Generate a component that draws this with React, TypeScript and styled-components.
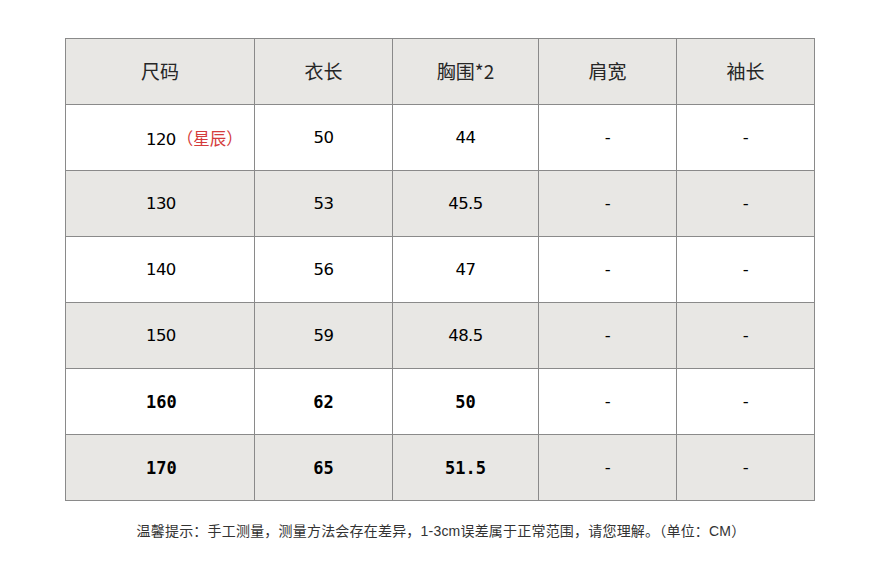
import React from "react";
import styled, { createGlobalStyle } from "styled-components";

const Global = createGlobalStyle`
  html, body { margin: 0; padding: 0; background: #ffffff; }
  body { font-family: "Liberation Sans", "Noto Sans CJK SC", sans-serif; }
`;

const Page = styled.div`
  width: 880px;
  height: 570px;
  padding: 38px 0 0 65px;
  box-sizing: border-box;
  background: #ffffff;
`;

const Table = styled.table`
  border-collapse: collapse;
  table-layout: fixed;
  width: 750px;
`;

const Row = styled.tr<{ $shade: boolean }>`
  height: 66px;
  background: ${(p) => (p.$shade ? "#e8e7e4" : "#ffffff")};
`;

const HeadCell = styled.th`
  border: 1px solid #8a8a8a;
  padding: 0 0 2px 0;
  font-family: "Noto Sans CJK SC", sans-serif;
  font-weight: 400;
  font-size: 19px;
  color: #262626;
  text-align: center;
  vertical-align: middle;
`;

const Cell = styled.td<{ $bold: boolean; $first?: boolean }>`
  border: 1px solid #8a8a8a;
  padding: 0 0 0 ${(p) => (p.$first ? "80px" : "0")};
  text-align: ${(p) => (p.$first ? "left" : "center")};
  vertical-align: middle;
  color: #000;
  font-family: ${(p) =>
    p.$bold
      ? '"DejaVu Sans Mono", "Liberation Mono", monospace'
      : '"DejaVu Sans", "Noto Sans CJK SC", sans-serif'};
  font-weight: ${(p) => (p.$bold ? 700 : 400)};
  font-size: ${(p) => (p.$bold ? "17px" : "16.5px")};
  letter-spacing: ${(p) => (p.$bold ? "0" : "-0.6px")};
  white-space: nowrap;
`;

const Note = styled.span`
  font-family: "Noto Sans CJK SC", sans-serif;
  font-size: 16.5px;
  letter-spacing: 0;
  color: #d43c3c;
  margin-left: 1px;
`;

const Footer = styled.p`
  margin: 19px 0 0 -65px;
  width: 880px;
  text-align: center;
  font-family: "Noto Sans CJK SC", sans-serif;
  font-size: 14px;
  letter-spacing: 0.2px;
  color: #333;
  padding-left: 2px;
  box-sizing: border-box;
`;

const Num = styled.span`
  font-family: "Liberation Sans", sans-serif;
`;

const headers = ["尺码", "衣长", "胸围*2", "肩宽", "袖长"];
const widths = [189, 138, 146, 138, 138];

type RowData = { size: string; note?: string; cols: string[]; bold?: boolean };
const rows: RowData[] = [
  { size: "120", note: "（星辰）", cols: ["50", "44", "-", "-"] },
  { size: "130", cols: ["53", "45.5", "-", "-"] },
  { size: "140", cols: ["56", "47", "-", "-"] },
  { size: "150", cols: ["59", "48.5", "-", "-"] },
  { size: "160", cols: ["62", "50", "-", "-"], bold: true },
  { size: "170", cols: ["65", "51.5", "-", "-"], bold: true },
];

export default function App() {
  return (
    <Page>
      <Global />
      <Table>
        <colgroup>
          {widths.map((w, i) => (
            <col key={i} style={{ width: w }} />
          ))}
        </colgroup>
        <thead>
          <Row $shade>
            {headers.map((h) => (
              <HeadCell key={h}>{h}</HeadCell>
            ))}
          </Row>
        </thead>
        <tbody>
          {rows.map((r, i) => (
            <Row key={r.size} $shade={i % 2 === 1}>
              <Cell $bold={!!r.bold} $first>
                {r.size}
                {r.note && <Note>{r.note}</Note>}
              </Cell>
              {r.cols.map((c, j) => (
                <Cell key={j} $bold={!!r.bold && c !== "-"}>
                  {c}
                </Cell>
              ))}
            </Row>
          ))}
        </tbody>
      </Table>
      <Footer>
        温馨提示：手工测量，测量方法会存在差异，<Num>1-3cm</Num>误差属于正常范围，请您理解。（单位：<Num>CM</Num>）
      </Footer>
    </Page>
  );
}
